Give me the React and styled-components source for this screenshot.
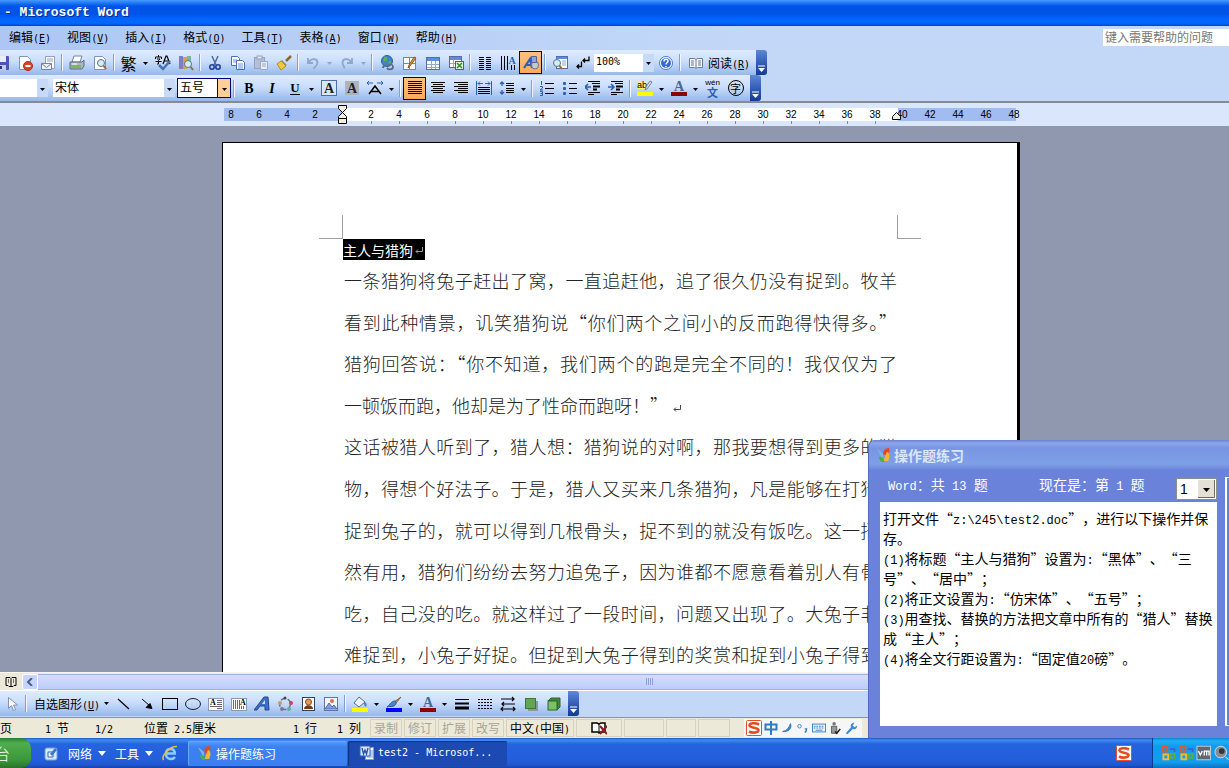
import React, { useState } from 'react';
import styled, { createGlobalStyle } from 'styled-components';

const CJK = "'Noto Sans CJK SC', sans-serif";

const GlobalStyle = createGlobalStyle`
  * {
    box-sizing: border-box;
  }

  body {
    margin: 0;
    font-family: ${CJK};
    font-size: 12px;
    color: #000;
    overflow: hidden;
  }

  button, input, select {
    font: inherit;
    color: inherit;
    margin: 0;
    padding: 0;
    border: none;
    background: none;
  }

  p {
    margin: 0;
  }
`;

const Screen = styled.div`
  position: relative;
  display: flex;
  flex-direction: column;
  height: 100vh;
  overflow: hidden;
  white-space: pre;
`;

const Latin = styled.span`
  font-family: 'DejaVu Sans Mono', monospace;
  font-size: 10px;
  line-height: 1;
`;

const LatinLarge = styled.span`
  font-family: 'Liberation Mono', monospace;
  font-size: 12px;
  line-height: 1;
`;

/* ---------- title bar and menu ---------- */

const TitleBar = styled.header`
  flex: none;
  height: 26px;
  padding-left: 4px;
  font: bold 13px/26px 'Liberation Mono', monospace;
  color: #fff;
  text-shadow: 1px 1px 0 #0a2a88;
  background: linear-gradient(#4a9bff 0, #2b83fa 2px, #0055e8 6px, #0053e6 14px, #0066ff 19px, #0068ff 23px, #0043cf 26px);
`;

const MenuBar = styled.nav`
  flex: none;
  display: flex;
  align-items: center;
  justify-content: space-between;
  height: 24px;
  padding: 0 0 2px 9px;
  background: linear-gradient(90deg, #adc6f4, #c3d8f8 60%);
`;

const MenuItems = styled.div`
  display: flex;
  gap: 16px;
`;

const MenuItem = styled.button`
  height: 20px;
  line-height: 20px;
`;

const HelpInput = styled.input`
  width: 126px;
  height: 17px;
  padding: 0 0 2px 2px;
  background: #fff;

  &::placeholder {
    color: #777;
    opacity: 1;
  }
`;

/* ---------- toolbars ---------- */

const Dock = styled.div`
  flex: none;
  background: #c3d8f7;
  border-bottom: 2px solid #858a94;
`;

const Toolbar = styled.div`
  display: flex;
  align-items: center;
  width: fit-content;
  height: ${props => props.$height || 25}px;
  border-radius: 0 3px 3px 0;
  overflow: hidden;
  background: linear-gradient(#dfebff, #cadefb 45%, #96b8ec);
`;

const ToolButton = styled.button`
  flex: none;
  display: flex;
  align-items: center;
  justify-content: center;
  width: 23px;
  height: 23px;
  background: ${props => (props.$active ? 'linear-gradient(#ffc184, #ffa95a)' : 'none')};
  border: ${props => (props.$active ? '1px solid #000080' : 'none')};
`;

const FirstButton = styled(ToolButton)`
  margin-left: -10px;
`;

const CaretButton = styled.button`
  flex: none;
  width: 11px;
  height: 23px;
  line-height: 0;
  text-align: center;
  color: ${props => props.$color || '#000'};
`;

const Separator = styled.span`
  flex: none;
  width: 2px;
  height: 17px;
  margin: 0 2px;
  background: #f2f7ff;
  border-left: 1px solid #7f9fd4;
`;

const LabelButton = styled.button`
  display: flex;
  align-items: center;
  gap: 4px;
  height: 23px;
  padding: 0 3px 0 5px;
`;

const EndCap = styled.button`
  display: flex;
  align-items: flex-end;
  justify-content: center;
  width: 11px;
  height: 100%;
  margin-left: 3px;
  padding-bottom: 3px;
  background: linear-gradient(#5d88d6, #2c57b0 60%, #113a94);
`;

const Combo = styled.div`
  flex: none;
  display: flex;
  width: ${props => props.$width}px;
  height: ${props => (props.$hot ? 20 : 18)}px;
  margin-right: ${props => props.$gap || 0}px;
  background: #fff;
  border: ${props => (props.$hot ? '1px solid #000080' : 'none')};

  input {
    flex: 1;
    min-width: 0;
    padding: 0 0 3px 2px;
    font-family: ${props => (props.$latin ? "'DejaVu Sans Mono', monospace" : CJK)};
    font-size: ${props => (props.$latin ? 10 : 12)}px;
  }

  button {
    width: ${props => (props.$hot ? 13 : 12)}px;
    line-height: 0;
    background: ${props => (props.$hot ? '#ffcf94' : '#c6daf8')};
    border-left: 1px solid ${props => (props.$hot ? '#000080' : '#fff')};
  }
`;

/* ---------- ruler ---------- */

const RulerBand = styled.div`
  flex: none;
  height: 23px;
  padding: 5px 0 0 224px;
  background: #d9e6fb;
`;

const RulerStrip = styled.div`
  position: relative;
  display: flex;
  width: 792px;
  height: 13px;
  font: 10px/13px 'Liberation Sans', sans-serif;
`;

const RulerZone = styled.div`
  flex: none;
  display: flex;
  width: ${props => props.$width}px;
  background: ${props => (props.$margin ? '#a0bcf0' : '#fff')};
`;

const RulerMark = styled.span`
  flex: none;
  width: 28px;
  text-align: center;

  &:first-child {
    margin-left: ${props => props.$start}px;
  }

  &::after {
    content: '';
    display: ${props => (props.$tick ? 'block' : 'none')};
    width: 1px;
    height: 3px;
    margin: 0 auto;
    background: #7c8cab;
  }
`;

const IndentMarker = styled.svg`
  position: absolute;
  left: ${props => props.$left}px;
  top: ${props => props.$top}px;
`;

/* ---------- document ---------- */

const Desk = styled.main`
  flex: 1;
  min-height: 0;
  overflow: hidden;
  padding: 16px 0 0 222px;
  background: #9098b0;
`;

const Page = styled.article`
  width: 798px;
  height: 1120px;
  padding: 72px 96px 0 96px;
  background: #fff;
  border: 1px solid #000;
  border-right: 3px solid #000;
`;

const CropMarks = styled.div`
  display: flex;
  justify-content: space-between;
  height: 24px;
`;

const CropMark = styled.span`
  width: 24px;
  border: 0 solid #a0a0a0;
  border-bottom-width: 1px;
  border-left-width: ${props => (props.$right ? 1 : 0)}px;
  border-right-width: ${props => (props.$right ? 0 : 1)}px;
`;

const Heading = styled.h1`
  display: flex;
  align-items: center;
  gap: 1px;
  width: fit-content;
  height: 21px;
  margin: 0 0 0 24px;
  padding-right: 1px;
  font-size: 14px;
  font-weight: normal;
  line-height: 20px;
  color: #fff;
  background: #000;
`;

const Body = styled.div`
  display: grid;
  grid-template-rows: repeat(10, 1fr);
  height: 424px;
  margin: 0 24px 0 25px;
  padding-top: 8px;
  font-size: 18px;
  font-weight: 300;
  line-height: 24px;
  color: #222;
`;

const Line = styled.p`
  height: 24px;
  white-space: nowrap;
  text-align: left;
  text-align-last: ${props => (props.$last ? 'left' : 'justify')};

  svg {
    margin-left: 4px;
  }
`;

/* ---------- bottom bars ---------- */

const ScrollRow = styled.div`
  flex: none;
  display: flex;
  align-items: center;
  height: 18px;
  background: #ece9d8;
  border-top: 1px solid #f7f6ee;
`;

const ViewButton = styled.button`
  width: 22px;
  height: 17px;
  line-height: 0;
`;

const ScrollArrow = styled.button`
  width: 16px;
  height: 16px;
  line-height: 0;
  background: #c6d5fb;
  border: 1px solid #fff;
  border-radius: 2px;
`;

const ScrollThumb = styled.div`
  flex: 1;
  display: flex;
  align-items: center;
  justify-content: center;
  height: 16px;
  padding-left: 32px;
  background: linear-gradient(#d3defd, #bccdfa);
  border: 1px solid #9db3e4;
  border-width: 1px 0;
`;

const DrawDock = styled.div`
  flex: none;
  height: 28px;
  background: #c3d8f7;
  border-top: 1px solid #fff;
  border-bottom: 1px solid #8a93a5;
`;

const StatusBar = styled.footer`
  flex: none;
  display: flex;
  align-items: center;
  height: 20px;
  background: #ece9d8;
`;

const StatusText = styled.span`
  flex: none;
  width: ${props => props.$width}px;
  line-height: 18px;
  overflow: hidden;
`;

const StatusCell = styled.span`
  flex: none;
  width: ${props => props.$width || 32}px;
  height: 18px;
  margin-right: 2px;
  line-height: 16px;
  text-align: center;
  color: ${props => (props.$on ? '#000' : '#a9a594')};
  border: 1px solid #d5d1be;
`;

const ImeBar = styled.div`
  flex: none;
  display: flex;
  align-items: center;
  gap: 2px;
  height: 18px;
  margin-left: 12px;
  padding: 0 4px 0 2px;
  background: #f5f6f5;
`;

const TaskBar = styled.footer`
  flex: none;
  display: flex;
  align-items: center;
  height: 30px;
  color: #fff;
  background: linear-gradient(#1f55c4 0, #3f8cf3 2px, #2663de 6px, #245edb 22px, #2057cf 27px, #1941a5 30px);
`;

const StartButton = styled.button`
  width: 31px;
  height: 30px;
  overflow: hidden;
  font-size: 16px;
  font-weight: 300;
  line-height: 26px;
  text-align: left;
  text-indent: -6px;
  background: linear-gradient(#2f7a30, #4fae4e 5px, #3b973b 22px, #2a7229);
  border-radius: 0 10px 10px 0;
`;

const QuickLaunch = styled.div`
  flex: none;
  display: flex;
  align-items: center;
  gap: 9px;
  width: 157px;
  padding-left: 12px;
`;

const QuickMenu = styled.button`
  display: flex;
  align-items: center;
  gap: 6px;
`;

const TaskButton = styled.button`
  display: flex;
  align-items: center;
  gap: 3px;
  width: 159px;
  height: 25px;
  margin-right: 1px;
  padding-left: ${props => props.$pad}px;
  border-radius: 2px;
  background: ${props => (props.$pressed ? '#1c4ab2' : 'linear-gradient(#5a9cf8, #3c81f0 6px, #3b7ff0)')};
  box-shadow: inset 1px 1px 1px ${props => (props.$pressed ? '#12307f' : '#6aa8fb')};
`;

const Tray = styled.div`
  display: flex;
  align-items: center;
  gap: 2px;
  width: 77px;
  height: 30px;
  margin-left: 20px;
  padding-left: 8px;
  overflow: hidden;
  background: linear-gradient(#1180d8, #1fb0f8 3px, #129bee 8px, #139ded 24px, #0c71c4);
  border-left: 1px solid #0a3c8c;
`;

const Spacer = styled.span`
  flex: 1;
`;

/* ---------- exercise window ---------- */

const Exercise = styled.section`
  position: absolute;
  right: 0;
  bottom: 30px;
  width: 361px;
  height: 298px;
  background: #6a82da;
  border-top-left-radius: 7px;
  border-left: 1px solid #5468c0;
  font-size: 14px;
  text-spacing-trim: space-all;
`;

const ExerciseTitle = styled.h2`
  display: flex;
  align-items: center;
  gap: 2px;
  height: 30px;
  margin: 0;
  padding-left: 7px;
  font-size: 14px;
  font-weight: bold;
  color: #dbe5fb;
  border-top-left-radius: 7px;
  background: linear-gradient(#6c80d2, #8ba6ea 3px, #7995e2 8px, #7e9fe6 24px, #6c86dc);
`;

const ExerciseMain = styled.div`
  display: flex;
  gap: 8px;
  height: 256px;
  padding-left: 11px;
`;

const ExercisePane = styled.div`
  width: 337px;
`;

const ExerciseInfo = styled.div`
  display: flex;
  align-items: center;
  height: 32px;
  padding-left: 8px;
  color: #fff;
`;

const InfoText = styled.span`
  width: ${props => props.$width}px;
  line-height: 20px;
  margin-bottom: 4px;
`;

const Picker = styled.label`
  position: relative;
  width: 41px;
  height: 22px;
  margin-top: 5px;

  select {
    width: 41px;
    height: 22px;
    padding-left: 3px;
    appearance: none;
    font: 14px 'Liberation Sans', sans-serif;
    color: #000;
    background: #fff;
    border: 1px solid #8d8d8d;
  }

  svg {
    position: absolute;
    right: 2px;
    top: 2px;
    pointer-events: none;
  }
`;

const Task = styled.div`
  height: 224px;
  padding: 6px 3px;
  line-height: 20px;
  background: #fff;

  p {
    height: 20px;
  }
`;

const SideFrame = styled.div`
  flex: 1;
  margin-top: 7px;
  border: 1px solid #fff;
  border-width: 1px 0 1px 2px;
`;

/* ---------- drawings ---------- */

const BLUE = '#2f5fb3';

const rules = (xs, ys, w, color = '#000') =>
  ys.map((y, i) => <rect key={y} x={xs[i % xs.length]} y={y} width={Array.isArray(w) ? w[i % w.length] : w} height="1" fill={color} />);

const serifA = (x, y, size, fill) => (
  <text x={x} y={y} fontSize={size} fontFamily="Liberation Serif, serif" fontWeight="bold" fill={fill} textAnchor="middle">A</text>
);

const sheet = <path d="M2.5 1.5h8l3 3v10h-11z" fill="#fff" stroke="#7e92bd" />;

const lens = (cx, cy) => (
  <>
    <path d={`M${cx + 2} ${cy + 2}l3 4`} stroke="#a8692c" strokeWidth="2" />
    <circle cx={cx} cy={cy} r="3.5" fill="#d3ecfa" stroke="#5c7186" />
  </>
);

const icons = {
  save: <><rect x="1" y="1" width="14" height="14" rx="1" fill="#4b55b5" /><path d="M4 1h8v6H4z" fill="#e8ecfb" /><path d="M5 10h7v5H5z" fill="#c4c9ea" /><path d="M6 11h2v3H6z" fill="#2c3585" /></>,
  permission: <>{sheet}<circle cx="11" cy="11" r="4.5" fill="#d9452b" stroke="#a52a16" /><path d="M8.500 11h5" stroke="#fff" strokeWidth="2" /></>,
  mail: <><path d="M5.500 1.500h9v12h-9z" fill="#fff" stroke="#8fa0c0" /><path d="M7 4h6M7 6h6" stroke="#8fa0c0" /><path d="M1.500 8.500h10v6h-10z" fill="#eceff5" stroke="#75829c" /><path d="M1.500 8.500l5 4 5-4" fill="none" stroke="#75829c" /></>,
  print: <><path d="M5 1h8l-2 6H3z" fill="#fff" stroke="#7686a0" /><path d="M1 7h12l2-2v6l-2 3H1z" fill="#aeb6c6" stroke="#5e6b80" /><path d="M2 10h10v3H2z" fill="#6fbf5a" /><path d="M3 9h5" stroke="#fff" /></>,
  preview: <>{sheet}{lens(9, 8)}</>,
  spell: <><path d="M3.500 0v2M.500 4V2h6v2M2 4h3L3.500 5.500V9H2M.500 6.500h6" fill="none" stroke="#000" /><path d="M8 9l3-8h1l3 8M9.500 6h4" fill="none" stroke="#000" strokeWidth="1.200" /><path d="M4 10l4 4 7-8" fill="none" stroke="#4872b8" strokeWidth="2.500" /></>,
  research: <><rect x="1" y="1" width="4" height="13" fill="#7a7fc6" /><rect x="5" y="2" width="4" height="12" fill="#d8a24d" /><rect x="9" y="1" width="4" height="8" fill="#7fb0a1" />{lens(10, 9)}</>,
  cut: <><path d="M5 1l4 9M11 1l-4 9" stroke="#536c99" strokeWidth="1.500" /><circle cx="5" cy="12" r="2.200" fill="none" stroke="#1f3f94" strokeWidth="1.600" /><circle cx="11" cy="12" r="2.200" fill="none" stroke="#1f3f94" strokeWidth="1.600" /></>,
  copy: <><path d="M1.500 1.500h6l2 2v7h-8z" fill="#fff" stroke="#4a6fb5" /><path d="M3 5h4M3 7h4" stroke="#6f93d4" /><path d="M6.500 5.500h6l2 2v7h-8z" fill="#fff" stroke="#4a6fb5" /><path d="M8 9h5M8 11h5M8 13h5" stroke="#6f93d4" /></>,
  paste: <><rect x="1.500" y="2.500" width="10" height="11" fill="#b3bfd4" stroke="#93a3bf" /><rect x="4" y="1" width="5" height="3" fill="#dfe4ee" stroke="#93a3bf" /><path d="M7.500 6.500h7v8h-7z" fill="#e6ebf5" stroke="#9aaac6" /><path d="M9 9h4M9 11h4" stroke="#9aaac6" /></>,
  painter: <><path d="M15 1l-5 5" stroke="#8a6a2a" strokeWidth="2.500" /><path d="M6 5l5 5-2 1-5-4z" fill="#8892a5" /><path d="M5 6l5 5-5 4-4-6z" fill="#f2c83c" stroke="#b38d1e" /></>,
  undo: <path d="M3 3v5h5M3.500 7.500c3-5 9-4 9 0 0 3-2 4-4 6" fill="none" stroke="#8fa6cf" strokeWidth="1.800" />,
  redo: <path d="M13 3v5h-5M12.500 7.500c-3-5-9-4-9 0 0 3 2 4 2 6" fill="none" stroke="#8fa6cf" strokeWidth="1.800" />,
  link: <><circle cx="8" cy="6" r="5.500" fill="#3e86c8" stroke="#28619d" /><path d="M5 2c3-1 4 1 3 3s-4 0-4 3zM10 6c2 0 3 1 2 3s-3 1-2-3z" fill="#63b04d" /><path d="M4 13c0-3 4-3 5-1M8 13c1 2 6 2 6-1s-3-3-4-2" fill="none" stroke="#596b85" strokeWidth="1.800" /></>,
  borders: <><rect x="1.500" y="2.500" width="12" height="12" fill="#fff" stroke="#6e87b8" /><path d="M7.500 3v11M2 8.500h11" stroke="#6e87b8" /><path d="M14 3l-6 8-2 2 1-3 5-8z" fill="#e0913d" stroke="#925a1c" /></>,
  table: <><rect x="1.500" y="2.500" width="13" height="12" fill="#fff" stroke="#4b6fb0" /><rect x="2" y="3" width="12" height="3" fill="#5d8ddd" /><path d="M2 9.500h12M6.500 6v8M10.500 6v8M2 12.500h12" stroke="#8fa8d4" /></>,
  excel: <><rect x="1.500" y="1.500" width="12" height="11" fill="#fff" stroke="#4b6fb0" /><rect x="2" y="2" width="11" height="3" fill="#5d8ddd" /><path d="M2 8.500h6M5.500 5v7" stroke="#8fa8d4" /><rect x="7.500" y="6.500" width="8" height="8" fill="#e6f6e1" stroke="#2e7b34" /><path d="M9 8l5 5M14 8l-5 5" stroke="#2e8b38" strokeWidth="1.500" /></>,
  columns: <>{rules([2], [2, 4, 6, 8, 10, 12, 14], 5)}{rules([9], [2, 4, 6, 8, 10, 12, 14], 5)}</>,
  direction: <><path d="M1.500 1v14M4.500 1v14M7.500 1v14M11.500 10v5M14.500 10v5" stroke="#000" />{serifA(12, 9, 10, BLUE)}</>,
  drawing: <><path d="M1 13L7 4l2 9M4 10h4" fill="none" stroke={BLUE} strokeWidth="2.200" /><ellipse cx="12" cy="10" rx="3.500" ry="4" fill="#c6c9cf" stroke="#6a7385" /><path d="M8.500 1.500h5v6h-5z" fill="#8fa5d8" stroke="#4e6299" /></>,
  docmap: <><rect x="4.500" y="1.500" width="11" height="12" fill="#fff" stroke="#4b6fb0" /><rect x="5" y="2" width="10" height="2" fill="#5d8ddd" /><path d="M10 6h4M10 8h4M10 10h4" stroke="#8fa8d4" />{lens(5, 8)}</>,
  marks: <path d="M14 1.500v4H8M10 3.500l-2 2 2 2M6.500 6.500v5H2M4 9.500l-2 2 2 2" fill="none" stroke="#000" strokeWidth="1.300" />,
  help: <><circle cx="8" cy="8" r="6.500" fill="#fff" stroke="#4a78cf" /><circle cx="8" cy="8" r="5" fill="#2f6cd8" /><path d="M6 6.500c0-3 4-3 4-.5 0 2-2 1.500-2 3.500M8 11v1.200" fill="none" stroke="#fff" strokeWidth="1.500" /></>,
  read: <><path d="M1.500 3.500h5l1.500 1 1.500-1h5v9h-5l-1.500 1-1.500-1h-5z" fill="#f4f7fd" stroke="#6d7b96" /><path d="M8 5v8M3 6h3M3 8h3M3 10h3M10 6h3M10 8h3M10 10h3" stroke="#6d7b96" /></>,
  bold: <text x="8" y="13" fontSize="14" fontFamily="Liberation Serif, serif" fontWeight="bold" textAnchor="middle">B</text>,
  italic: <text x="8" y="13" fontSize="14" fontFamily="Liberation Serif, serif" fontWeight="bold" fontStyle="italic" textAnchor="middle">I</text>,
  underline: <><text x="8" y="12" fontSize="13" fontFamily="Liberation Serif, serif" fontWeight="bold" textAnchor="middle">U</text><path d="M3 14.500h10" stroke="#000" /></>,
  boxA: <><rect x=".5" y=".5" width="15" height="15" fill="#d9e6fb" stroke="#4a6fa8" />{serifA(8, 13, 14, '#222')}</>,
  shadeA: <><rect x="1" y="1" width="14" height="14" fill="#aeb4bf" />{serifA(8, 13, 14, '#222')}</>,
  scaleA: <><path d="M2 14l6-8 6 8M4 11.500h8" fill="none" stroke="#000" strokeWidth="1.500" /><path d="M0 3h6M2 1L0 3l2 2M10 3h6M14 1l2 2-2 2" fill="none" stroke="#2d5fb8" /></>,
  justify: rules([1], [1, 3, 5, 7, 9, 11, 13], 14),
  center: rules([1, 3], [2, 4, 6, 8, 10, 12], [14, 10]),
  right: rules([1, 5], [2, 4, 6, 8, 10, 12], [14, 10]),
  distribute: <><path d="M.500 1v14M15.500 1v14M2 3.500h5M9 3.500h5M4 1.500l-2 2 2 2M12 1.500l2 2-2 2" fill="none" stroke={BLUE} />{rules([2], [7, 9, 11, 13], 12)}</>,
  spacing: <><path d="M3 2v4M3 10v4M1 4l2-2 2 2M1 12l2 2 2-2" fill="none" stroke={BLUE} strokeWidth="1.300" />{rules([7], [3, 5, 8, 10, 12], 8)}</>,
  numbered: <><path d="M2.500 1v4M1 6.500h2.500v1.500L1 10h3M1 11.500h2.500v4H1M1.500 13.500h2" fill="none" stroke={BLUE} />{rules([6], [3, 8, 13], 9)}</>,
  bullets: <>{[2, 7, 12].map(y => <rect key={y} x="1" y={y} width="3" height="3" rx="1" fill={BLUE} />)}{rules([7], [3, 8, 13], 8)}</>,
  outdent: <><path d="M6 7H0M3 4L0 7l3 3" fill="none" stroke={BLUE} strokeWidth="1.600" />{rules([3, 7], [1, 3], [12, 8])}<path d="M8 6.500h7M8 9.500h4" stroke="#000" strokeWidth="2" />{rules([3], [12, 14], [12, 6])}</>,
  indent: <><path d="M0 7h6M3 4l3 3-3 3" fill="none" stroke={BLUE} strokeWidth="1.600" />{rules([3, 7], [1, 3], [12, 8])}<path d="M8 6.500h7M8 9.500h4" stroke="#000" strokeWidth="2" />{rules([3], [12, 14], [12, 6])}</>,
  highlight: <><rect x="0" y="1" width="9" height="8" fill="#f7f26a" /><text x="0" y="8" fontSize="9" fontFamily="Liberation Sans, sans-serif">ab</text><path d="M15 2l-5 7-2 1 1-3 4-6z" fill="#dce3ea" stroke="#74808f" /><rect x="0" y="12" width="16" height="4" fill="#ff0" /></>,
  fontColor: <>{serifA(8, 11, 14, '#4a6593')}<rect x="0" y="12" width="16" height="4" fill="#8b0000" /></>,
  pointer: <path d="M4.500 1.500v11l3-3 2 5 2-1-2-4.500h4z" fill="#fff" stroke="#8193b8" />,
  line: <path d="M2 3l11 10" stroke="#000" strokeWidth="1.200" />,
  arrow: <path d="M3 3l8 7M13 12.500l-6-1 4-4z" stroke="#000" />,
  rect: <rect x=".5" y="2.500" width="15" height="11" fill="none" stroke="#000" />,
  oval: <ellipse cx="8" cy="8" rx="7.500" ry="5.500" fill="none" stroke="#222" />,
  textBox: <><rect x=".5" y="2.500" width="15" height="12" fill="#fff" stroke="#8b98b5" />{serifA(5, 9, 8, '#000')}{rules([9, 9, 9, 2], [4, 6, 8, 10, 12], [5, 5, 5, 12], '#667')}</>,
  verticalBox: <><rect x=".5" y="2.500" width="15" height="12" fill="#fff" stroke="#8b98b5" /><path d="M2.500 4v9M4.500 4v9M6.500 4v9M8.500 4v9M10.500 10v3M12.500 10v3" stroke="#667" />{serifA(12, 9, 8, '#000')}</>,
  wordArt: <><path d="M0 14L10 1h4l1 13h-4v-4H6l-3 4z" fill="#3b6fc9" stroke="#27488a" /><path d="M8 8h3V4z" fill="#d7e4fa" /></>,
  diagram: <><circle cx="8" cy="8" r="5.500" fill="none" stroke="#66738c" strokeWidth="1.500" strokeDasharray="4 3" /><circle cx="8" cy="2" r="1.500" fill="#444" /><circle cx="14" cy="7" r="2" fill="#c44" /><circle cx="3" cy="7" r="2" fill="#c96" /><circle cx="5" cy="13" r="2" fill="#779" /><circle cx="12" cy="13" r="2" fill="#6a9" /></>,
  clipArt: <><rect x="2.500" y="1.500" width="12" height="13" fill="#fff" stroke="#333f5c" /><circle cx="8.500" cy="6" r="3" fill="#e39a58" stroke="#8a4a1e" /><path d="M4 13c0-5 9-5 9 0z" fill="#6f3b1c" /></>,
  picture: <><rect x="1.500" y="1.500" width="13" height="13" fill="#f1f6ff" stroke="#5c74a8" /><circle cx="9" cy="5" r="2" fill="#e0703c" /><path d="M2 13l4-6 3 4 2-2 3 4z" fill="#7f9fd6" stroke="#4d6caa" /></>,
  fill: <><path d="M7 1l6 5-6 5-5-4z" fill="#eef2f8" stroke="#5d6c86" /><path d="M12 6c3 0 3 3 2 5-2-1-2-3-2-5z" fill="#4a7fce" /><rect x="0" y="12" width="16" height="4" fill="#ff0" /></>,
  lineColor: <><path d="M15 1l-5 6-2-1z" fill="#d1a157" stroke="#7b6036" /><path d="M9 5c2 1 1 4-1 5-3 1-5 0-7 1 3-2 4-6 8-6z" fill="#4d7fce" stroke="#32599b" /><rect x="0" y="12" width="16" height="4" fill="#00f" /></>,
  weights: <><path d="M1 3.500h14" stroke="#000" /><path d="M1 7.500h14" stroke="#000" strokeWidth="2" /><path d="M1 12h14" stroke="#000" strokeWidth="3" /></>,
  dashes: <path d="M1 3.500h14M1 6.500h14M1 9.500h14M1 12.500h14" stroke="#000" strokeDasharray="2 1" />,
  arrows: <path d="M1 3h13M12 1l2 2-2 2M2 8h13M4 6L2 8l2 2M1 13h14M3 11l-2 2 2 2M13 11l2 2-2 2" fill="none" stroke="#000" strokeWidth="1.200" />,
  shadow: <><rect x="5" y="5" width="10" height="10" fill="#8898a8" /><rect x="2.500" y="2.500" width="10" height="10" fill="#63a553" stroke="#3c7a33" /></>,
  cube: <><path d="M5 2h9v9l-3 3V5H2z" fill="#3f8a38" stroke="#2c6628" /><rect x="2" y="5" width="9" height="9" fill="#7cc06b" stroke="#2c6628" /></>,
  bookView: <path d="M3 3.500h4l1 1 1-1h4v8h-2l-1 1H6l-1-1H3zM8 5v8M5 6h1M5 8h1M10 6h1M10 8h1" fill="none" stroke="#000" />,
  proof: <><path d="M1 3h5l2 1 2-1h4v9H9l-1 1-1-1H1z" fill="#fff" stroke="#000" strokeWidth="1.500" /><path d="M8 4v9" stroke="#000" /><path d="M9 6l7 8M16 6l-7 8" stroke="#8b1a1a" strokeWidth="2" /></>,
  sogou: <><rect x=".500" y=".500" width="15" height="15" rx="1" fill="#fff" stroke="#e0502a" /><path d="M13 4.500C9 2.500 3.500 3 3.500 5.500S12.500 7.500 12.500 10 7 13.500 3 11.500" fill="none" stroke="#e8481c" strokeWidth="2.600" /></>,
  moon: <path d="M12 3c2 5-2 10-9 9 5-1 7-4 9-9z" fill="#3b87d4" stroke="#2f6fb5" />,
  punct: <><circle cx="4" cy="6" r="2" fill="none" stroke="#2f7bc8" /><path d="M10 9h2c0 2 0 3-2 4" fill="none" stroke="#2f7bc8" strokeWidth="1.600" /></>,
  keyboard: <><rect x=".5" y="3.500" width="15" height="9" fill="#e9f4ff" stroke="#2f7bc8" /><path d="M2 6h12M2 8h12" stroke="#2f7bc8" strokeDasharray="2 1" /><path d="M4 10.500h8" stroke="#2f7bc8" /></>,
  person: <><circle cx="7" cy="3" r="2" fill="#777" /><path d="M4 6h6v8H4z" fill="#999" stroke="#555" /><path d="M8 12l2 2 4-5" fill="none" stroke="#222" strokeWidth="1.800" /></>,
  wrench: <path d="M2 14l6-7c-1-3 1-5 4-5l-2 3 2 2 3-2c0 4-3 5-5 4l-6 6z" fill="#3f8ad6" />,
  desktop: <><rect x="2" y="3" width="12" height="12" rx="2" fill="#d6e8fb" stroke="#6fa3dd" /><path d="M5 7h5v5H5z" fill="#fff" stroke="#2f6cc0" /><path d="M7 9l5-6 2 2-5 6z" fill="#3e77c9" /></>,
  ie: <><path d="M14 8.500H5M13 12c-2 3-9 3-9-3s8-7 9-.500" fill="none" stroke="#8accfa" strokeWidth="2.400" /><path d="M1.500 15C-1 11 8 1 15 1.500" fill="none" stroke="#f0b93a" strokeWidth="1.600" /></>,
  logo: <><path d="M1 2l6 5v6z" fill="#7fb6ee" /><path d="M7 7c0-4 3-6 6-6 1 4 0 6-2 8z" fill="#e8442a" /><path d="M11 5c3 0 3 6 1 9H8c0-3 1-5 3-9z" fill="#f5b82c" /><path d="M3 10c3-1 5 1 5 5-3 0-5-2-5-5z" fill="#4fae3f" /></>,
  word: <><path d="M6.500 2.500h8v12h-8z" fill="#fff" stroke="#7d9fdb" /><path d="M10 6h4M10 8h4M10 10h4M8 12h6" stroke="#7d9fdb" /><rect x="1" y="1" width="10" height="10" fill="#dce7fa" stroke="#2f5fb3" /><path d="M3 3l1.500 6L6 5l1.500 4L9 3" fill="none" stroke="#1f4fa8" strokeWidth="1.300" /></>,
  office: <><rect x="1.500" y="1.500" width="5" height="5" fill="none" stroke="#e8572b" strokeWidth="2" /><path d="M9 4h5v3" fill="none" stroke="#3b62c9" strokeWidth="1.800" /><rect x="2.500" y="9.500" width="5" height="5" fill="none" stroke="#f0c02c" strokeWidth="2" /><path d="M10 9h4v4h-4z" fill="none" stroke="#5fae3d" strokeWidth="1.800" /></>,
  vm: <><rect x="1" y="1" width="14" height="14" fill="#63676e" stroke="#c8ccd2" /><path d="M2.500 6l2 4 2-4M8.500 10.500V6h5v4.500M11 6v4.500" fill="none" stroke="#fff" strokeWidth="1.400" /></>,
  speaker: <><circle cx="7" cy="7" r="6" fill="#868c96" stroke="#d4d8de" /><circle cx="8" cy="6" r="3" fill="#33373d" /><path d="M12 12l3 3" stroke="#fff" /></>,
};

const Icon = ({ name, size = 16 }) => (
  <svg width={size} height={size} viewBox="0 0 16 16" aria-hidden="true">{icons[name]}</svg>
);

const FanFace = styled.span`
  font-size: 16px;
  line-height: 20px;
`;

const CircledFace = styled.span`
  width: 16px;
  height: 16px;
  font-size: 11px;
  line-height: 14px;
  border: 1px solid #000;
  border-radius: 50%;
`;

const PinyinFace = styled.span`
  display: flex;
  flex-direction: column;
  align-items: center;
  font: 8px/8px 'Liberation Sans', sans-serif;

  b {
    font: bold 11px/11px ${CJK};
    color: ${BLUE};
  }
`;

// buttons whose face is a character of text, not a drawing
const faces = {
  fan: <FanFace>繁</FanFace>,
  circled: <CircledFace>字</CircledFace>,
  pinyin: <PinyinFace>wén<b>文</b></PinyinFace>,
};

const Triangle = ({ wide }) => (
  <svg width={wide ? 8 : 5} height={wide ? 5 : 3} viewBox="0 0 8 5" preserveAspectRatio="none" aria-hidden="true">
    <path d="M0 0h8L4 5z" fill="currentColor" />
  </svg>
);

const Return = ({ color }) => (
  <svg width="10" height="10" viewBox="0 0 10 10" aria-hidden="true">
    <path d="M8.500 2v4.500H2M4 4.500l-2 2 2 2" fill="none" stroke={color} />
  </svg>
);

// SimSun-like setting: every run of ASCII takes the half-width face
const mixed = (text, Face = Latin) =>
  text.split(/([\x20-\x7e]+)/).map((run, i) => (i % 2 ? <Face key={i}>{run}</Face> : run));

// '|' is a separator, 'v' a drop-down arrow ('V' greyed), '*' before a name marks a pressed button
const Tools = ({ list }) =>
  list.split(' ').map((name, i) => {
    if (name === '|') return <Separator key={i} />;
    if (name === 'v' || name === 'V') {
      return <CaretButton key={i} aria-label="更多" $color={name === 'V' ? '#8fa6cf' : undefined}><Triangle /></CaretButton>;
    }
    const id = name.replace('*', '');
    return <ToolButton key={i} aria-label={id} $active={name !== id}>{faces[id] || <Icon name={id} />}</ToolButton>;
  });

const Cap = () => (
  <EndCap aria-label="工具栏选项">
    <svg width="7" height="7" viewBox="0 0 7 7"><path d="M0 1h7" stroke="#fff" /><path d="M0 3h7L3.500 7z" fill="#fff" /></svg>
  </EndCap>
);

const ComboBox = ({ label, value, ...rest }) => {
  const [text, setText] = useState(value);
  return (
    <Combo {...rest}>
      <input aria-label={label} value={text} onChange={e => setText(e.target.value)} />
      <button aria-label={`${label}列表`}><Triangle /></button>
    </Combo>
  );
};

const menus = [
  ['编辑', 'E'], ['视图', 'V'], ['插入', 'I'], ['格式', 'O'],
  ['工具', 'T'], ['表格', 'A'], ['窗口', 'W'], ['帮助', 'H'],
];

const lines = [
  '一条猎狗将兔子赶出了窝，一直追赶他，追了很久仍没有捉到。牧羊',
  '看到此种情景，讥笑猎狗说“你们两个之间小的反而跑得快得多。”',
  '猎狗回答说：“你不知道，我们两个的跑是完全不同的！我仅仅为了',
  '一顿饭而跑，他却是为了性命而跑呀！”',
  '这话被猎人听到了，猎人想：猎狗说的对啊，那我要想得到更多的猎',
  '物，得想个好法子。于是，猎人又买来几条猎狗，凡是能够在打猎中',
  '捉到兔子的，就可以得到几根骨头，捉不到的就没有饭吃。这一招果',
  '然有用，猎狗们纷纷去努力追兔子，因为谁都不愿意看着别人有骨头',
  '吃，自己没的吃。就这样过了一段时间，问题又出现了。大兔子非常',
  '难捉到，小兔子好捉。但捉到大兔子得到的奖赏和捉到小兔子得到的',
];

const taskLines = [
  '打开文件“z:\\245\\test2.doc”，进行以下操作并保',
  '存。',
  '(1)将标题“主人与猎狗”设置为:“黑体”、“三',
  '号”、“居中”；',
  '(2)将正文设置为:“仿宋体”、“五号”；',
  '(3)用查找、替换的方法把文章中所有的“猎人”替换',
  '成“主人”；',
  '(4)将全文行距设置为:“固定值20磅”。',
];

const Ruler = () => (
  <RulerBand>
    <RulerStrip>
      <RulerZone $width={118} $margin>
        {[8, 6, 4, 2].map(n => <RulerMark key={n} $start={-7}>{n}</RulerMark>)}
      </RulerZone>
      <RulerZone $width={556}>
        {Array.from({ length: 19 }, (_, i) => <RulerMark key={i} $start={15} $tick>{(i + 1) * 2}</RulerMark>)}
      </RulerZone>
      <RulerZone $width={118} $margin>
        {[40, 42, 44, 46, 48].map(n => <RulerMark key={n} $start={-10}>{n}</RulerMark>)}
      </RulerZone>
      <IndentMarker $left={113} $top={-4} width="11" height="22" viewBox="0 0 11 22">
        <path d="M1.500 1.500h8v3l-4 4 4 4v7h-8v-7l4-4-4-4zM1.500 14.500h8" fill="#f1efe2" stroke="#000" />
      </IndentMarker>
      <IndentMarker $left={667} $top={3} width="11" height="10" viewBox="0 0 11 10">
        <path d="M1.500 5.500l4-4 4 4v3h-8z" fill="#f1efe2" stroke="#000" />
      </IndentMarker>
    </RulerStrip>
  </RulerBand>
);

const ExerciseWindow = () => (
  <Exercise>
    <ExerciseTitle><Icon name="logo" />操作题练习</ExerciseTitle>
    <ExerciseMain>
      <ExercisePane>
        <ExerciseInfo>
          <InfoText $width={151}>{mixed('Word：共 13 题', LatinLarge)}</InfoText>
          <InfoText $width={137}>{mixed('现在是：第 1 题', LatinLarge)}</InfoText>
          <Picker>
            <select aria-label="题号" defaultValue="1">
              <option>1</option>
              <option>2</option>
            </select>
            <svg width="17" height="18" viewBox="0 0 17 18">
              <path d="M0 0h17v18H0z" fill="#e4e0d4" />
              <path d="M16.500 0v17.500H0" fill="none" stroke="#6f6c64" />
              <path d="M5 8h7l-3.500 4z" fill="#000" />
            </svg>
          </Picker>
        </ExerciseInfo>
        <Task>
          {taskLines.map(line => <p key={line}>{mixed(line, LatinLarge)}</p>)}
        </Task>
      </ExercisePane>
      <SideFrame />
    </ExerciseMain>
  </Exercise>
);

const App = () => (
  <>
    <GlobalStyle />
    <Screen>
      <TitleBar>- Microsoft Word</TitleBar>
      <MenuBar>
        <MenuItems>
          {menus.map(([name, key]) => (
            <MenuItem key={key}>{name}<Latin>(<u>{key}</u>)</Latin></MenuItem>
          ))}
        </MenuItems>
        <HelpInput aria-label="帮助" placeholder="键入需要帮助的问题" />
      </MenuBar>
      <Dock>
        <Toolbar>
          <FirstButton aria-label="save"><Icon name="save" /></FirstButton>
          <Tools list="permission mail | print preview | fan v spell research | cut copy paste painter | undo V redo V | link borders table excel | columns direction *drawing | docmap marks" />
          <ComboBox label="显示比例" value="100%" $width={60} $latin />
          <Tools list="help |" />
          <LabelButton><Icon name="read" /><span>阅读<Latin>(<u>R</u>)</Latin></span></LabelButton>
          <Cap />
        </Toolbar>
        <Toolbar $height={26}>
          <ComboBox label="样式" value="" $width={48} $gap={5} />
          <ComboBox label="字体" value="宋体" $width={122} $gap={2} />
          <ComboBox label="字号" value="五号" $width={54} $hot />
          <Tools list="| bold italic underline v boxA shadeA scaleA v | *justify center right distribute spacing v | numbered bullets outdent indent | highlight v fontColor v pinyin circled" />
          <Cap />
        </Toolbar>
      </Dock>
      <Ruler />
      <Desk>
        <Page>
          <CropMarks>
            <CropMark />
            <CropMark $right />
          </CropMarks>
          <Heading>主人与猎狗<Return color="#999" /></Heading>
          <Body>
            {lines.map(line => {
              const last = line.endsWith('呀！”');
              return <Line key={line} $last={last}>{line}{last && <Return color="#444" />}</Line>;
            })}
          </Body>
        </Page>
      </Desk>
      <ScrollRow>
        <ViewButton aria-label="阅读版式"><Icon name="bookView" /></ViewButton>
        <ScrollArrow aria-label="向左滚动">
          <svg width="8" height="8" viewBox="0 0 8 8"><path d="M6 0L2 4l4 4" fill="none" stroke="#4d6185" strokeWidth="2" /></svg>
        </ScrollArrow>
        <ScrollThumb>
          <svg width="8" height="7" viewBox="0 0 8 7"><path d="M.5 0v7M2.500 0v7M4.500 0v7M6.500 0v7" stroke="#8ca2dd" /></svg>
        </ScrollThumb>
      </ScrollRow>
      <DrawDock>
        <Toolbar>
          <Tools list="pointer |" />
          <LabelButton><span>自选图形<Latin>(<u>U</u>)</Latin></span><Triangle /></LabelButton>
          <Tools list="line arrow rect oval textBox verticalBox wordArt diagram clipArt picture | fill v lineColor v fontColor v weights dashes arrows shadow cube" />
          <Cap />
        </Toolbar>
      </DrawDock>
      <StatusBar>
        <StatusText $width={45}>页</StatusText>
        <StatusText $width={50}>{mixed('1 节')}</StatusText>
        <StatusText $width={49}>{mixed('1/2')}</StatusText>
        <StatusText $width={149}>{mixed('位置 2.5厘米')}</StatusText>
        <StatusText $width={44}>{mixed('1 行')}</StatusText>
        <StatusText $width={33}>{mixed('1 列')}</StatusText>
        <StatusCell>录制</StatusCell>
        <StatusCell>修订</StatusCell>
        <StatusCell>扩展</StatusCell>
        <StatusCell>改写</StatusCell>
        <StatusCell $width={68} $on>{mixed('中文(中国)')}</StatusCell>
        <StatusCell $width={46}><Icon name="proof" /></StatusCell>
        <StatusCell $width={40} />
        <StatusCell $width={30} />
        <StatusCell $width={32} />
        <ImeBar>
          <Icon name="sogou" />
          <svg width="14" height="16" viewBox="0 0 14 16"><path d="M1.500 4.500h11v5h-11zM7 1v14" fill="none" stroke="#2f7bc8" strokeWidth="2" /></svg>
          <Icon name="moon" size={14} />
          <Icon name="punct" size={14} />
          <Icon name="keyboard" size={14} />
          <Icon name="person" size={14} />
          <Icon name="wrench" size={14} />
        </ImeBar>
      </StatusBar>
      <TaskBar>
        <StartButton>台</StartButton>
        <QuickLaunch>
          <Icon name="desktop" />
          <QuickMenu>网络<Triangle wide /></QuickMenu>
          <QuickMenu>工具<Triangle wide /></QuickMenu>
          <Icon name="ie" />
        </QuickLaunch>
        <TaskButton $pad={9}><Icon name="logo" />操作题练习</TaskButton>
        <TaskButton $pad={11} $pressed><Icon name="word" />{mixed('test2 - Microsof...')}</TaskButton>
        <Spacer />
        <Icon name="sogou" />
        <Tray>
          <Icon name="office" />
          <Icon name="office" />
          <Icon name="vm" />
          <Icon name="speaker" />
        </Tray>
      </TaskBar>
      <ExerciseWindow />
    </Screen>
  </>
);

export default App;
